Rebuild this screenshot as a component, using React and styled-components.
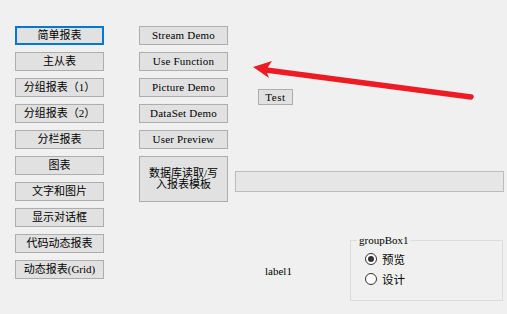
import React from "react";
import styled, { createGlobalStyle, css } from "styled-components";

const Global = createGlobalStyle`
  html, body { margin: 0; padding: 0; background: #f0f0f0; }
  body { font-family: "Liberation Serif", "Noto Sans CJK SC", serif; color: #000; }
  * { box-sizing: border-box; }
`;

const Form = styled.div`
  position: relative;
  width: 507px;
  height: 314px;
  background: #f0f0f0;
  display: flex;
  align-items: flex-start;
  padding: 26px 3px 0 15px;
`;

const Column = styled.div`
  display: flex;
  flex-direction: column;
  gap: 7px;
  width: 89px;
  margin-right: ${(p) => p.$gapRight || 0}px;
`;

const Button = styled.button`
  width: 89px;
  height: ${(p) => (p.$tall ? 46 : 19)}px;
  padding: 0;
  margin: 0;
  background: #e1e1e1;
  border: 1px solid #adadad;
  border-radius: 0;
  font-family: "Liberation Serif", "Noto Sans CJK SC", serif;
  font-size: 11px;
  line-height: 11px;
  color: #000;
  white-space: nowrap;
  display: flex;
  flex-direction: column;
  align-items: center;
  justify-content: center;
  ${(p) => p.$latin && css`
    letter-spacing: 0.2px;
  `}
  ${(p) => p.$focused && css`
    border: 2px solid #0078d7;
  `}
`;

const SmallButton = styled(Button)`
  width: 35px;
  height: 16px;
  margin: 63px 0 0 23px;
  letter-spacing: 0.6px;
`;

const Side = styled.div`
  display: flex;
  flex-direction: column;
  width: 269px;
`;

const Progress = styled.div`
  margin-top: 66px;
  width: 269px;
  height: 21px;
  background: #e6e6e6;
  border: 1px solid #bcbcbc;
`;

const BottomRow = styled.div`
  display: flex;
  align-items: center;
  margin-top: 48px;
`;

const Label = styled.span`
  margin-left: 30px;
  width: 85px;
  font-size: 11px;
`;

const GroupBox = styled.div`
  position: relative;
  width: 153px;
  height: 61px;
  border: 1px solid #dcdcdc;
  padding: 8px 0 0 14px;
  display: flex;
  flex-direction: column;
`;

const GroupTitle = styled.span`
  position: absolute;
  top: -7px;
  left: 6px;
  padding: 0 2px;
  background: #f0f0f0;
  font-size: 11px;
  line-height: 12px;
`;

const RadioRow = styled.label`
  display: flex;
  align-items: center;
  gap: 5px;
  height: 20px;
  font-family: "Noto Sans CJK SC", sans-serif;
  font-size: 11.5px;
`;

const RadioCircle = styled.span`
  width: 12px;
  height: 12px;
  border-radius: 50%;
  border: 1px solid #333;
  background: #fff;
  display: flex;
  align-items: center;
  justify-content: center;
  &::after {
    content: "";
    width: 6px;
    height: 6px;
    border-radius: 50%;
    background: ${(p) => (p.$checked ? "#333" : "transparent")};
  }
`;

const Arrow = styled.svg`
  position: absolute;
  left: 0;
  top: 0;
  pointer-events: none;
`;

const leftButtons = [
  "简单报表", "主从表", "分组报表（1）", "分组报表（2）", "分栏报表",
  "图表", "文字和图片", "显示对话框", "代码动态报表", "动态报表(Grid)",
];
const rightButtons = ["Stream Demo", "Use Function", "Picture Demo", "DataSet Demo", "User Preview"];

export default function App() {
  return (
    <>
      <Global />
      <Form>
        <Column $gapRight={35}>
          {leftButtons.map((t, i) => (
            <Button key={t} $focused={i === 0}>{t}</Button>
          ))}
        </Column>
        <Column $gapRight={7}>
          {rightButtons.map((t) => (
            <Button key={t} $latin>{t}</Button>
          ))}
          <Button $tall>
            <span>数据库读取/写</span>
            <span>入报表模板</span>
          </Button>
        </Column>
        <Side>
          <SmallButton>Test</SmallButton>
          <Progress />
          <BottomRow>
            <Label>label1</Label>
            <GroupBox>
              <GroupTitle>groupBox1</GroupTitle>
              <RadioRow>
                <RadioCircle $checked />
                预览
              </RadioRow>
              <RadioRow>
                <RadioCircle />
                设计
              </RadioRow>
            </GroupBox>
          </BottomRow>
        </Side>
        <Arrow width="507" height="314" viewBox="0 0 507 314">
          <line x1="266" y1="70" x2="471" y2="97" stroke="#ed1c24" strokeWidth="5.5" strokeLinecap="round" />
          <polygon points="253,67 272,61 266,70 269,78" fill="#ed1c24" />
        </Arrow>
      </Form>
    </>
  );
}
